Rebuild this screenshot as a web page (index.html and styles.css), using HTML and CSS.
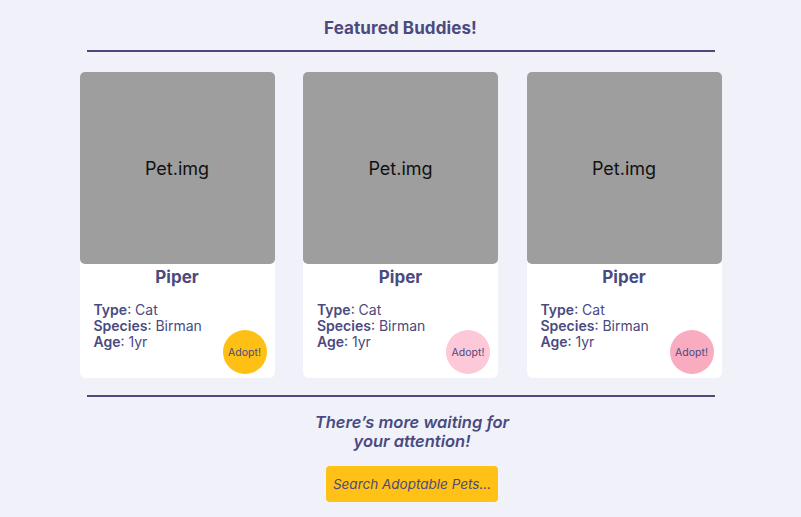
FILE: index.html
```html
<!DOCTYPE html>
<html>
<head>
<meta charset="utf-8">
<link rel="stylesheet" href="styles.css">
</head>
<body>
<main class="page">
  <h1 class="title">Featured Buddies!</h1>
  <hr class="rule">
  <section class="cards">
    <article class="card">
      <div class="pet-img">Pet.img</div>
      <h2 class="pet-name">Piper</h2>
      <div class="card-body">
        <ul class="info">
          <li><b>Type</b>: Cat</li>
          <li><b>Species</b>: Birman</li>
          <li><b>Age</b>: 1yr</li>
        </ul>
        <button class="adopt adopt-yellow">Adopt!</button>
      </div>
    </article>
    <article class="card">
      <div class="pet-img">Pet.img</div>
      <h2 class="pet-name">Piper</h2>
      <div class="card-body">
        <ul class="info">
          <li><b>Type</b>: Cat</li>
          <li><b>Species</b>: Birman</li>
          <li><b>Age</b>: 1yr</li>
        </ul>
        <button class="adopt adopt-light">Adopt!</button>
      </div>
    </article>
    <article class="card">
      <div class="pet-img">Pet.img</div>
      <h2 class="pet-name">Piper</h2>
      <div class="card-body">
        <ul class="info">
          <li><b>Type</b>: Cat</li>
          <li><b>Species</b>: Birman</li>
          <li><b>Age</b>: 1yr</li>
        </ul>
        <button class="adopt adopt-pink">Adopt!</button>
      </div>
    </article>
  </section>
  <hr class="rule rule-bottom">
  <section class="more">
    <p class="more-text">There’s more waiting for<br>your attention!</p>
    <button class="search">Search Adoptable Pets...</button>
  </section>
</main>
</body>
</html>
```
FILE: styles.css
```css
* { box-sizing: border-box; }
html, body {
  margin: 0;
  padding: 0;
  background: #f1f1f9;
  font-family: Inter, "Noto Sans", sans-serif;
  color: #4a4a7f;
}
.page {
  width: 801px;
  height: 517px;
  display: flex;
  flex-direction: column;
  align-items: center;
  padding-top: 17px;
}
.title {
  margin: 0;
  font-size: 17px;
  font-weight: 700;
  line-height: 23px;
  letter-spacing: 0.1px;
}
.rule {
  width: 628px;
  margin: 10px 0 0 0;
  border: 0;
  border-top: 2px solid #4a4a7f;
  height: 0;
}
.cards {
  margin-top: 20px;
  display: grid;
  grid-template-columns: repeat(3, 195px);
  gap: 28.5px;
}
.card {
  background: #fff;
  border-radius: 6px;
  height: 306px;
  display: flex;
  flex-direction: column;
}
.pet-img {
  height: 192px;
  background: #9e9e9e;
  border-radius: 5px;
  display: flex;
  align-items: center;
  justify-content: center;
  color: #111;
  font-size: 18px;
}
.pet-name {
  margin: 2px 0 0;
  text-align: center;
  font-size: 17px;
  font-weight: 700;
  line-height: 22px;
}
.card-body {
  display: flex;
  justify-content: space-between;
  align-items: flex-end;
  padding: 0 8px 4px 14px;
  flex: 1;
}
.info {
  list-style: none;
  margin: 0;
  padding: 0;
  align-self: flex-start;
  margin-top: 14px;
  font-size: 14px;
  line-height: 16px;
}
.info b { font-weight: 600; }
.adopt {
  width: 44px;
  height: 44px;
  border-radius: 50%;
  border: 0;
  padding: 0;
  font-family: Inter, sans-serif;
  font-size: 10.5px;
  color: #4a4a7f;
}
.adopt-yellow { background: #fec014; }
.adopt-light { background: #fdc8d8; }
.adopt-pink { background: #f9abc0; }
.rule-bottom { margin-top: 17px; }
.more {
  display: flex;
  flex-direction: column;
  align-items: center;
  padding-left: 23px;
}
.more-text {
  margin: 16px 0 0;
  text-align: center;
  font-style: italic;
  font-weight: 600;
  font-size: 16.5px;
  line-height: 19px;
}
.search {
  margin-top: 15px;
  width: 172px;
  height: 36px;
  border: 0;
  border-radius: 4px;
  background: #ffc115;
  font-family: Inter, sans-serif;
  font-style: italic;
  font-size: 13.5px;
  color: #4a4a7f;
  padding: 0;
}
```
